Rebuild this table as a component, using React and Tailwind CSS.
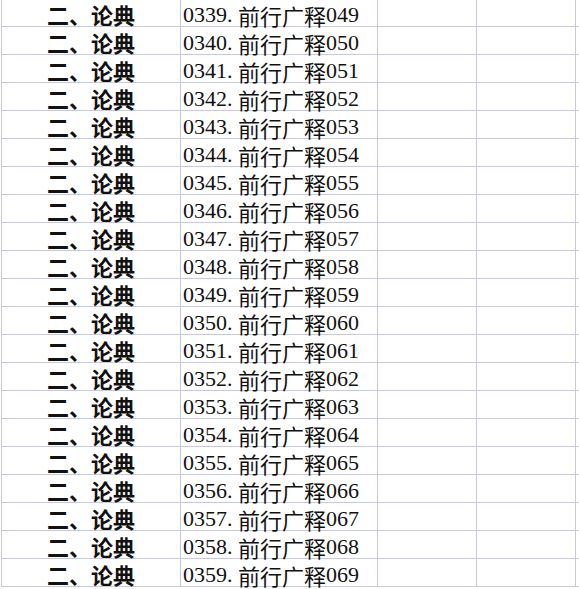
import React from "react";

const rows = Array.from({ length: 21 }, (_, i) => ({
  n: String(339 + i).padStart(4, "0"),
  s: String(49 + i).padStart(3, "0"),
}));

const cjk = { fontFamily: '"Noto Sans CJK SC", sans-serif' };
const lat = { fontFamily: '"Liberation Serif", serif' };

export default function App() {
  return (
    <div className="w-[579px] h-[589px] overflow-hidden bg-white">
      <div className="-mt-px">
        {rows.map((r) => (
          <div
            key={r.n}
            className="flex h-[28px] border-b border-[#c6c9dc] ml-px"
          >
            <div className="w-px shrink-0 bg-[#c6c9dc]" />
            <div
              className="w-[179px] shrink-0 border-r border-[#c6c9dc] flex items-end justify-center pb-[1px] text-[22px] leading-[22px] font-bold text-[#111]"
              style={cjk}
            >
              二、论典
            </div>
            <div className="w-[197px] shrink-0 border-r border-[#c6c9dc] flex items-end pl-[2px] pb-0 text-[22px] leading-[22px] text-[#111] whitespace-nowrap">
              <span style={lat}>{r.n}</span>
              <span className="inline-block w-[11px]" style={lat}>.</span>
              <span style={cjk}>前行广释</span>
              <span style={lat}>{r.s}</span>
            </div>
            <div className="w-[99px] shrink-0 border-r border-[#c6c9dc]" />
            <div className="w-[99px] shrink-0 border-r border-[#c6c9dc]" />
            <div className="flex-1" />
          </div>
        ))}
      </div>
    </div>
  );
}
